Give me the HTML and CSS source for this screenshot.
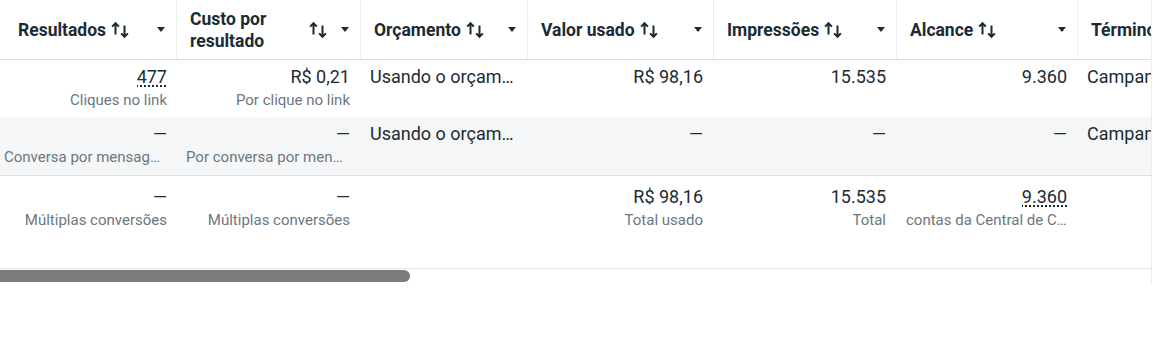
FILE: index.html
```html
<!DOCTYPE html>
<html lang="pt-BR">

<head>
  <meta charset="UTF-8" />
  <meta name="viewport" content="width=device-width, initial-scale=1.0" />
  <title>Relatório de campanhas</title>
  <link rel="stylesheet" href="styles.css">
</head>

<body>
  <div class="grid-wrap">
    <div class="row head">
      <div class="hcell first">
        <span class="hlabel">Resultados</span>
        <svg class="sort" viewBox="0 0 16 16"><path d="M4 12V2M1 5l3-3 3 3M12 4v10M9 11l3 3 3-3" /></svg>
        <span class="caret"></span>
      </div>
      <div class="hcell">
        <span class="hlabel">Custo por resultado</span>
        <svg class="sort" viewBox="0 0 16 16"><path d="M4 12V2M1 5l3-3 3 3M12 4v10M9 11l3 3 3-3" /></svg>
        <span class="caret"></span>
      </div>
      <div class="hcell">
        <span class="hlabel">Orçamento</span>
        <svg class="sort" viewBox="0 0 16 16"><path d="M4 12V2M1 5l3-3 3 3M12 4v10M9 11l3 3 3-3" /></svg>
        <span class="caret"></span>
      </div>
      <div class="hcell">
        <span class="hlabel">Valor usado</span>
        <svg class="sort" viewBox="0 0 16 16"><path d="M4 12V2M1 5l3-3 3 3M12 4v10M9 11l3 3 3-3" /></svg>
        <span class="caret"></span>
      </div>
      <div class="hcell">
        <span class="hlabel">Impressões</span>
        <svg class="sort" viewBox="0 0 16 16"><path d="M4 12V2M1 5l3-3 3 3M12 4v10M9 11l3 3 3-3" /></svg>
        <span class="caret"></span>
      </div>
      <div class="hcell">
        <span class="hlabel">Alcance</span>
        <svg class="sort" viewBox="0 0 16 16"><path d="M4 12V2M1 5l3-3 3 3M12 4v10M9 11l3 3 3-3" /></svg>
        <span class="caret"></span>
      </div>
      <div class="hcell">
        <span class="hlabel">Término</span>
      </div>
    </div>

    <div class="row body">
      <div class="cell num first"><span class="val dotted">477</span><span class="sub">Cliques no link</span></div>
      <div class="cell num"><span class="val">R$ 0,21</span><span class="sub">Por clique no link</span></div>
      <div class="cell text"><span class="val">Usando o orçamento da campanha</span></div>
      <div class="cell num"><span class="val">R$ 98,16</span></div>
      <div class="cell num"><span class="val">15.535</span></div>
      <div class="cell num"><span class="val">9.360</span></div>
      <div class="cell text"><span class="val">Campanha em andamento</span></div>
    </div>

    <div class="row body alt">
      <div class="cell num first"><span class="val">—</span><span class="sub">Conversa por mensagem iniciada</span></div>
      <div class="cell num"><span class="val">—</span><span class="sub">Por conversa por mensagem iniciada</span></div>
      <div class="cell text"><span class="val">Usando o orçamento da campanha</span></div>
      <div class="cell num"><span class="val">—</span></div>
      <div class="cell num"><span class="val">—</span></div>
      <div class="cell num"><span class="val">—</span></div>
      <div class="cell text"><span class="val">Campanha em andamento</span></div>
    </div>

    <div class="row body total">
      <div class="cell num first"><span class="val">—</span><span class="sub">Múltiplas conversões</span></div>
      <div class="cell num"><span class="val">—</span><span class="sub">Múltiplas conversões</span></div>
      <div class="cell text"></div>
      <div class="cell num"><span class="val">R$ 98,16</span><span class="sub">Total usado</span></div>
      <div class="cell num"><span class="val">15.535</span><span class="sub">Total</span></div>
      <div class="cell num"><span class="val dotted">9.360</span><span class="sub">contas da Central de Contas</span></div>
      <div class="cell text"></div>
    </div>

    <div class="scrollbar">
      <div class="thumb"></div>
    </div>
  </div>
</body>

</html>
```

FILE: styles.css
```css
body {
  margin: 0;
  background-color: #ffffff;
  font-family: Roboto, "Noto Sans", sans-serif;
  color: #1c2b33;
}

.grid-wrap {
  width: 1151px;
  overflow: hidden;
  border-right: 1px solid #eceef0;
}

.row {
  display: grid;
  grid-template-columns: 176px 184px 167px 186px 183px 181px 220px;
}

.head {
  height: 59px;
  border-bottom: 1px solid #dadde1;
}

.hcell {
  display: flex;
  align-items: center;
  padding: 0 11px 0 13px;
  border-left: 1px solid #eceef0;
  font-size: 17.5px;
  font-weight: 700;
  line-height: 22px;
  white-space: normal;
}

.hcell.first {
  padding-left: 18px;
  border-left: none;
}

.sort {
  flex: none;
  width: 18px;
  height: 18px;
  margin-left: 5px;
  margin-right: 14px;
  fill: none;
  stroke: #1c2b33;
  stroke-width: 1.8;
}

.caret {
  flex: none;
  margin-left: auto;
  width: 0;
  height: 0;
  border-left: 4px solid transparent;
  border-right: 4px solid transparent;
  border-top: 5px solid #1c2b33;
}

.body {
  height: 57px;
}

.body.alt {
  height: 58px;
  background-color: #f5f6f7;
  border-bottom: 1px solid #dadde1;
}

.body.total {
  height: 92px;
  border-bottom: 1px solid #e4e6e9;
}

.cell {
  display: flex;
  flex-direction: column;
  padding: 5px 10px 0 10px;
  min-width: 0;
}

.total .cell {
  padding-top: 9px;
}

.cell.first {
  padding-left: 4px;
  padding-right: 9px;
}

.cell.num {
  align-items: flex-end;
  text-align: right;
}

.val {
  font-size: 18px;
  line-height: 24px;
  max-width: 100%;
  white-space: nowrap;
  overflow: hidden;
  text-overflow: ellipsis;
}

.dotted {
  text-decoration: underline dotted #1c2b33;
  text-underline-offset: 3px;
}

.sub {
  font-size: 15px;
  line-height: 22px;
  color: #6b7781;
  max-width: 100%;
  white-space: nowrap;
  overflow: hidden;
  text-overflow: ellipsis;
}

.scrollbar {
  height: 14px;
  padding-top: 1px;
}

.thumb {
  width: 410px;
  height: 12px;
  background-color: #7b7b7b;
  border-radius: 0 6px 6px 0;
}
```
